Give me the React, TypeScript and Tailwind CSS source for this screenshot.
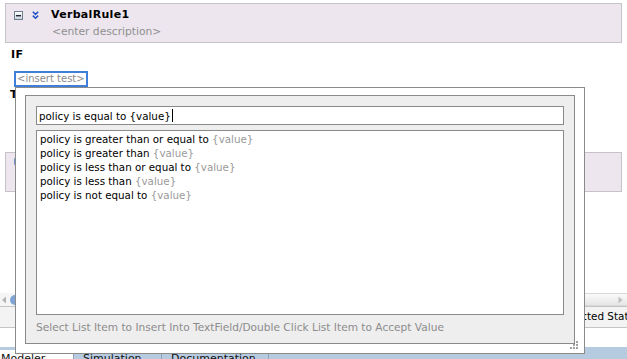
import { ReactNode } from 'react'

const font = "font-['DejaVu_Sans',sans-serif]"

const conditions = [
  'policy is greater than or equal to',
  'policy is greater than',
  'policy is less than or equal to',
  'policy is less than',
  'policy is not equal to',
]

function MinusBox() {
  return (
    <svg width="9" height="9" viewBox="0 0 9 9" className="shrink-0">
      <defs>
        <linearGradient id="mb" x1="0" y1="0" x2="0" y2="1">
          <stop offset="0" stopColor="#ffffff" />
          <stop offset="1" stopColor="#c9d2dc" />
        </linearGradient>
      </defs>
      <rect x="0.5" y="0.5" width="8" height="8" fill="url(#mb)" stroke="#6f7f90" />
      <rect x="2" y="4" width="5" height="1.4" fill="#1c2430" />
    </svg>
  )
}

function DoubleChevron() {
  return (
    <svg width="7" height="8" viewBox="0 0 7 8" className="shrink-0">
      <path d="M0.8 0.8 L3.5 3.4 L6.2 0.8 M0.8 4.6 L3.5 7.2 L6.2 4.6" fill="none" stroke="#1d4fc4" strokeWidth="1.5" />
    </svg>
  )
}

function RuleBox({ children }: { children?: ReactNode }) {
  return <div className="ml-[5px] h-[40px] w-[617px] border border-[#c6c3c8] bg-[#ede6ee]">{children}</div>
}

function Grip() {
  const dots = [
    [7, 0],
    [4, 3],
    [7, 3],
    [1, 6],
    [4, 6],
    [7, 6],
  ]
  return (
    <svg width="10" height="9" viewBox="0 0 10 9" className="absolute right-[5px] bottom-[3px]">
      {dots.map(([x, y], i) => (
        <rect key={i} x={x} y={y} width="2" height="2" fill="#a0a0a0" />
      ))}
    </svg>
  )
}

export default function App() {
  return (
    <div className={`relative flex h-[359px] w-[627px] flex-col overflow-hidden bg-white text-[10.3px] text-black ${font}`}>
      <div className="mt-[3px]">
        <RuleBox>
          <div className="mt-[4px] flex h-[14px] items-center pl-[8px]">
            <MinusBox />
            <div className="ml-[9px]">
              <DoubleChevron />
            </div>
            <span className="ml-[12px] text-[11px] leading-[14px] font-bold tracking-[0.3px]">VerbalRule1</span>
          </div>
          <div className="mt-[3px] pl-[46px] text-[10.7px] leading-[14px] text-[#8f8f8f]">&lt;enter description&gt;</div>
        </RuleBox>
      </div>

      <div className="mt-[5px] ml-[11px] text-[11px] leading-[14px] font-bold tracking-[0.5px]">IF</div>

      <div className="mt-[9px] ml-[14px] flex h-[16px] w-[74px] items-center border-2 border-[#3f7fd9] pl-[1px] text-[10px] leading-[12px] whitespace-nowrap text-[#8a8a8a]">
        &lt;insert test&gt;
      </div>

      <div className="mt-[1px] ml-[10px] text-[11px] leading-[14px] font-bold">THEN</div>

      <div className="mt-[50px]">
        <RuleBox>
          <div className="mt-[4px] ml-[8px] h-[9px] w-[3px] rounded-l-full bg-[#6b93c8]" />
        </RuleBox>
      </div>

      <div className="flex-1" />

      <div className="flex h-[13px] items-center bg-[#f5f5f5]">
        <svg width="6" height="8" viewBox="0 0 6 8" className="ml-[1px]">
          <path d="M5 0.5 L1 4 L5 7.5 Z" fill="#b4b4b4" />
        </svg>
        <div className="ml-[3px] h-[10px] w-[8px] rounded-l-full bg-[#7ea5d4]" />
        <div className="flex-1" />
        <div className="flex h-[13px] w-[44px] items-center justify-end border-y border-[#d8d8d8] bg-gradient-to-b from-[#fafafa] to-[#e6e6e6] pr-[4px]">
          <svg width="5" height="8" viewBox="0 0 5 8">
            <path d="M0.5 0.5 L4.5 4 L0.5 7.5 Z" fill="#c0c0c0" />
          </svg>
        </div>
      </div>

      <div className="flex h-[22px] items-center border-y border-[#c4c4c4] bg-[#f3f3f3] pl-[559px] text-[10.4px] whitespace-nowrap">
        Selected Statement
      </div>

      <div className="h-[19px]" />

      <div className="flex h-[12px] items-start bg-[#b7cbe0] text-[11px] whitespace-nowrap text-[#111]">
        <div className="mt-[3px] h-[20px] w-[73px] bg-white pt-[2px] pl-[1px] leading-[14px]">Modeler</div>
        <div className="h-[20px] w-[88px] border-l border-[#8fa2b8] pt-[5px] pl-[9px] leading-[14px]">Simulation</div>
        <div className="h-[20px] w-[107px] border-l border-[#8fa2b8] pt-[5px] pl-[9px] leading-[14px]">Documentation</div>
        <div className="h-[20px] flex-1 border-l border-[#8fa2b8]" />
      </div>

      <div className="absolute top-[87px] left-[15px] z-10 h-[267px] w-[570px] border border-[#8a8a8a] bg-white pt-[7px] pr-[9px] pb-[9px] pl-[9px]">
        <div className="flex h-full flex-col border border-[#8a8a8a] bg-[#eeeeee] px-[10px] pt-[10px]">
          <div className="flex h-[19px] items-center border border-[#8a8a8a] bg-white pl-[2px] leading-[14px]">
            <span>policy is equal to {'{value}'}</span>
            <span className="ml-[1px] h-[13px] w-px bg-black" />
          </div>
          <div className="mt-[5px] h-[185px] border border-[#8a8a8a] bg-white pt-[1px] pl-[3px]">
            {conditions.map((c) => (
              <div key={c} className="leading-[14px] whitespace-nowrap">
                {c} <span className="text-[#9a9a9a]">{'{value}'}</span>
              </div>
            ))}
          </div>
          <div className="mt-[5px] text-[10.6px] leading-[14px] whitespace-nowrap text-[#8c8c8c]">
            Select List Item to Insert Into TextField/Double Click List Item to Accept Value
          </div>
        </div>
        <Grip />
      </div>
    </div>
  )
}
